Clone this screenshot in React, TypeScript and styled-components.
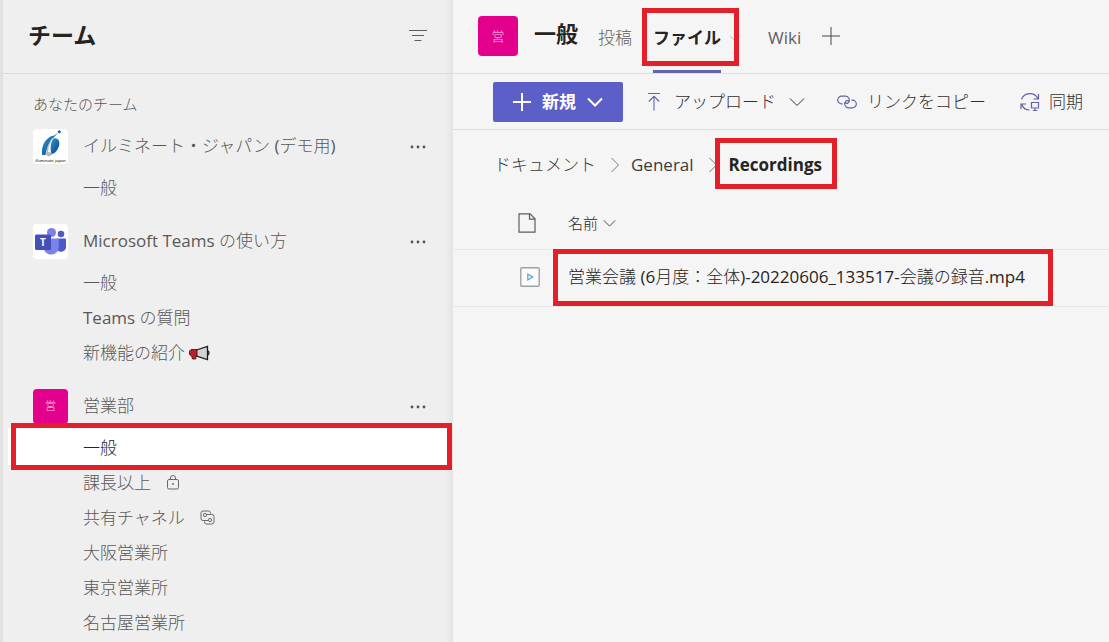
import React from "react";
import styled, { createGlobalStyle, css } from "styled-components";

const lightStack = `"Open Sans", "Noto Sans CJK JP Light", "Noto Sans CJK JP", sans-serif`;
const boldStack = `"Open Sans", "Noto Sans CJK JP", sans-serif`;

const GlobalStyle = createGlobalStyle`
  *, *::before, *::after { box-sizing: border-box; }
  html, body, #root { height: 100%; }
  body {
    margin: 0;
    background: #f5f5f5;
    color: #252423;
    font-family: ${lightStack};
    font-size: 17px;
    font-weight: 400;
    line-height: 24px;
  }
  h1, h2, h3, ul, ol { margin: 0; padding: 0; }
  ul, ol { list-style: none; }
  a { color: inherit; text-decoration: none; }
  button {
    margin: 0; padding: 0; border: 0; background: none;
    font: inherit; color: inherit; cursor: pointer;
  }
  svg { display: block; flex: none; }
`;

const bold = css`
  font-family: ${boldStack};
  font-weight: 700;
`;

const marked = css<{ $inset: string }>`
  position: relative;
  &::after {
    content: "";
    position: absolute;
    inset: ${(p) => p.$inset};
    border: 5px solid #e3202a;
    pointer-events: none;
    z-index: 2;
  }
`;

const Shell = styled.div`
  display: flex;
  min-height: 100%;
  border-left: 3px solid #e1e1e1;
`;

const Sidebar = styled.aside`
  flex: none;
  width: 450px;
  background: linear-gradient(to left, #e4e4e4, #efefef 8px);
  color: #5a5856;
`;

const SidebarHeader = styled.header`
  display: flex;
  align-items: center;
  justify-content: space-between;
  height: 74px;
  padding: 0 26px 4px 25px;
  border-bottom: 1px solid #dcdcdc;
`;

const SidebarTitle = styled.h1`
  ${bold}
  color: #252423;
  font-size: 23px;
  line-height: 32px;
`;

const IconButton = styled.button`
  display: flex;
  align-items: center;
`;

const SectionLabel = styled.h2`
  padding: 18px 30px 6px;
  font-size: 15px;
  font-weight: 400;
`;

const TeamList = styled.ul`
  display: grid;
  gap: 12px;
`;

const TeamRow = styled.div`
  display: flex;
  align-items: center;
  height: 48px;
  padding: 0 26px 0 30px;
`;

const TeamName = styled.h3`
  flex: 1;
  margin-left: 15px;
  font-size: 17px;
  font-weight: 400;
`;

const Avatar = styled.span<{ $size: number; $color: string }>`
  display: flex;
  align-items: center;
  justify-content: center;
  flex: none;
  width: ${(p) => p.$size}px;
  height: ${(p) => p.$size}px;
  border-radius: 4px;
  background: ${(p) => p.$color};
  color: #ffc4e6;
  font-size: ${(p) => (p.$size > 35 ? 13 : 11)}px;
  overflow: hidden;
`;

const ChannelItem = styled.li<{ $selected?: boolean; $inset: string }>`
  margin: 0 4px 0 5px;
  ${(p) =>
    p.$selected &&
    css`
      ${marked}
      background: #fff;
      box-shadow: 0 -2px 0 #fff;
      color: #252423;
    `}
`;

const ChannelLink = styled.a`
  display: flex;
  align-items: center;
  height: 35px;
  padding-left: 75px;
`;

const ChannelIcon = styled.span<{ $gap: number }>`
  margin-left: ${(p) => p.$gap}px;
`;

const Main = styled.main`
  flex: 1;
  min-width: 0;
`;

const ChannelHeader = styled.header`
  display: flex;
  align-items: center;
  height: 74px;
  padding-left: 25px;
  border-bottom: 1px solid #dfdfdf;
`;

const HeaderTitle = styled.div`
  display: flex;
  align-items: center;
  padding-bottom: 2px;
`;

const ChannelTitle = styled.h2`
  ${bold}
  margin: 0 20px 6px 16px;
  font-size: 22px;
  line-height: 32px;
`;

const Tabs = styled.nav`
  display: flex;
  align-self: stretch;
`;

const Tab = styled.a<{ $active?: boolean }>`
  display: flex;
  align-items: center;
  padding-top: 5px;
  border-bottom: 3px solid ${(p) => (p.$active ? "#6264a7" : "transparent")};
  color: ${(p) => (p.$active ? "#252423" : "#605e5c")};
  ${(p) => p.$active && bold}
`;

const ActiveTab = styled.div<{ $inset: string }>`
  ${marked}
  display: flex;
  margin: 0 28px 0 21px;
`;

const TabMenu = styled.button`
  padding: 4px 0 0 9px;
  color: #8a8886;
`;

const AddTab = styled.button`
  margin: 0 0 2px 21px;
  color: #484644;
`;

const Toolbar = styled.div`
  display: flex;
  align-items: center;
  height: 56px;
  padding-left: 40px;
  border-bottom: 1px solid #dfdfdf;
  color: #323130;
  white-space: nowrap;
`;

const NewButton = styled.button`
  display: flex;
  align-items: center;
  justify-content: center;
  gap: 11px;
  width: 130px;
  height: 40px;
  border-radius: 2px;
  background: #5b5fc7;
  color: #fff;
  ${bold}
`;

const Command = styled.button<{ $before: number; $gap: number }>`
  display: flex;
  align-items: center;
  gap: ${(p) => p.$gap}px;
  margin-left: ${(p) => p.$before}px;
`;

const Accent = styled.span`
  color: #6264a7;
`;

const Breadcrumb = styled.ol`
  display: flex;
  align-items: center;
  height: 67px;
  padding: 3px 0 0 41px;
  color: #3b3a39;
`;

const Crumb = styled.li`
  display: flex;
  align-items: center;
`;

const CrumbChevron = styled.span`
  margin: 0 11px 0 14px;
  color: #797775;
`;

const CurrentCrumb = styled.span<{ $inset: string }>`
  ${marked}
  ${bold}
  color: #252423;
`;

const FileTable = styled.table`
  width: 100%;
  border-collapse: collapse;
  table-layout: fixed;
  th, td {
    padding: 0;
    border-bottom: 1px solid #e9e9e9;
    text-align: left;
    font-weight: 400;
  }
`;

const HeadCell = styled.th<{ $width?: number }>`
  width: ${(p) => (p.$width ? `${p.$width}px` : "auto")};
  height: 52px;
  font-size: 15px;
`;

const FileCell = styled.td`
  && {
    height: 57px;
    padding-bottom: 2px;
  }
`;

const IconSlot = styled.span<{ $left: number }>`
  display: flex;
  padding-left: ${(p) => p.$left}px;
`;

const SortButton = styled.button`
  display: flex;
  align-items: center;
  gap: 5px;
`;

const FileLink = styled.a<{ $inset: string }>`
  ${marked}
  display: inline-block;
  white-space: nowrap;
`;

const Chevron = ({ w = 16, dir = "down", stroke = 1 }: { w?: number; dir?: "down" | "right"; stroke?: number }) =>
  dir === "down" ? (
    <svg width={w} height={w / 2 + 2} viewBox="0 0 16 10" fill="none" stroke="currentColor" strokeWidth={stroke} aria-hidden="true">
      <path d="M1 1.5 8 8.5 15 1.5" />
    </svg>
  ) : (
    <svg width="10" height="16" viewBox="0 0 10 16" fill="none" stroke="currentColor" aria-hidden="true">
      <path d="M1.5 1 8.5 8 1.5 15" />
    </svg>
  );

const Plus = ({ size = 18, stroke = 1 }: { size?: number; stroke?: number }) => (
  <svg width={size} height={size} viewBox="0 0 18 18" stroke="currentColor" strokeWidth={stroke} aria-hidden="true">
    <path d="M9 0v18M0 9h18" />
  </svg>
);

const FilterIcon = () => (
  <svg width="18" height="14" viewBox="0 0 18 14" stroke="#605e5c" aria-hidden="true">
    <path d="M0 2.5h18M3 7.5h12M5.5 12.5h7" />
  </svg>
);

const MoreIcon = () => (
  <svg width="18" height="6" viewBox="0 0 18 6" fill="#55534f" aria-hidden="true">
    <circle cx="3" cy="4" r="1.4" />
    <circle cx="9" cy="4" r="1.4" />
    <circle cx="15" cy="4" r="1.4" />
  </svg>
);

const IlluminateLogo = () => (
  <svg width="35" height="35" viewBox="0 0 35 35" aria-hidden="true">
    <defs>
      <linearGradient id="leaf" x1="0" y1="0" x2="1" y2="1">
        <stop offset="0" stopColor="#2f9bd0" />
        <stop offset="1" stopColor="#0b3f86" />
      </linearGradient>
    </defs>
    <path d="M9 26C8 16 13 8 21 6.500L26 3.200C18 10 14 17 12.500 26Z" fill="url(#leaf)" />
    <path d="M20.500 9.500C26 8 28 14 25 19.500c-2 4-5 6-7.500 5.500C16 20 17 14 20.500 9.500Z" fill="url(#leaf)" />
    <path d="M13 25C14 18 16 12 20.500 8 17 15 16.500 20 19 25.500c-1.500 2.500-5 2.500-6-.5Z" fill="#aeb8bf" />
    <path d="M15 23C15.500 17 17 13 20 9c-2.500 6-3 10-2 14.500Z" fill="#f7fafb" />
    <circle cx="26.300" cy="2.800" r="1.500" fill="#1c5e9c" />
    <text x="17.500" y="33" textAnchor="middle" fontFamily="Liberation Sans, sans-serif" fontSize="4.400" fontWeight="400" fill="#222">
      illuminate japan
    </text>
  </svg>
);

const TeamsLogo = () => (
  <svg width="35" height="35" viewBox="0 0 35 35" aria-hidden="true">
    <circle cx="28" cy="10" r="3.300" fill="#5059c9" />
    <path d="M24 14.500h8.200a.8.8 0 0 1 .8.800v7.500a5 5 0 0 1-9 3Z" fill="#5059c9" />
    <circle cx="18.500" cy="8.500" r="4.500" fill="#7b83eb" />
    <path d="M11.500 14.500h13.300a1 1 0 0 1 1 1V24a7.700 7.700 0 0 1-15.200 0v-8.500a1 1 0 0 1 .9-1Z" fill="#7b83eb" />
    <path d="M14 11h4v15h-7.200L10.600 14.500Z" fill="#5a62c4" />
    <rect x="2" y="10.500" width="16" height="15.500" rx="1.500" fill="#464eb8" />
    <text x="10" y="22" textAnchor="middle" fontFamily="Open Sans, sans-serif" fontSize="10" fontWeight="700" fill="#fff">
      T
    </text>
  </svg>
);

const MegaphoneIcon = () => (
  <svg width="22" height="16" viewBox="0 0 22 16" aria-hidden="true">
    <path d="M8.500 5 19.500 1.500v13L8.500 11Z" fill="#d3d3d3" stroke="#1b1b1b" strokeWidth="1.300" />
    <path d="M19.500 6c2 .3 2 3.700 0 4" fill="none" stroke="#1b1b1b" strokeWidth="1.300" />
    <path d="M3 4.500h6v6.800H7.800V14H4.500l-.8-2.700-2.200-1.800V6Z" fill="#b9202f" stroke="#3a1014" strokeWidth=".8" />
  </svg>
);

const LockIcon = () => (
  <svg width="14" height="16" viewBox="0 0 14 16" fill="none" stroke="#6b6967" aria-hidden="true">
    <rect x="1.500" y="4.500" width="11" height="9.500" rx="1.500" />
    <path d="M4.500 4.500V3a2.500 2.500 0 0 1 5 0v1.500" />
    <circle cx="7" cy="9" r=".9" fill="#6b6967" stroke="none" />
  </svg>
);

const SharedIcon = () => (
  <svg width="15" height="15" viewBox="0 0 15 15" fill="none" stroke="#6b6967" aria-hidden="true">
    <path d="M10.500 3.500V3A2 2 0 0 0 8.500 1H3a2 2 0 0 0-2 2v5.500a2 2 0 0 0 2 2h5" />
    <path d="M4.500 11.500v.5a2 2 0 0 0 2 2H12a2 2 0 0 0 2-2V6.500a2 2 0 0 0-2-2H6.500" />
    <circle cx="5" cy="5" r="1.600" />
    <circle cx="10" cy="10" r="1.600" />
  </svg>
);

const UploadIcon = () => (
  <svg width="14" height="19" viewBox="0 0 14 19" fill="none" stroke="currentColor" strokeWidth="1.100" aria-hidden="true">
    <path d="M1 1.500h12M7 18.500V4.500M1.800 9.500 7 4.300l5.200 5.200" />
  </svg>
);

const LinkIcon = () => (
  <svg width="20" height="14" viewBox="0 0 20 14" fill="none" stroke="currentColor" strokeWidth="1.200" aria-hidden="true">
    <path d="M5.500 8.800H4.500a3.800 3.800 0 0 1 0-7.600H8.500a3.800 3.800 0 0 1 2.600 6.600c-1 1-3 .9-3.400-.6" />
    <path d="M14.500 5.200h1a3.800 3.800 0 0 1 0 7.600H11.500a3.800 3.800 0 0 1-2.600-6.600c1-1 3-.9 3.400.6" />
  </svg>
);

const SyncIcon = () => (
  <svg width="20" height="20" viewBox="0 0 20 20" fill="none" stroke="currentColor" strokeWidth="1.200" aria-hidden="true">
    <path d="M1.500 7.500C4 0 14.500-.5 17.800 6.500M18.500 2v5h-5" />
    <path d="M9.500 18C6 18 3 16 1.800 12.500M1 17v-5h5" />
    <path d="M11.500 10.500h7v5.500h-7ZM15 16v2.500M12.800 18.500h4.400" />
  </svg>
);

const PageIcon = () => (
  <svg width="18" height="20" viewBox="0 0 18 20" fill="none" stroke="#605e5c" strokeWidth="1.200" aria-hidden="true">
    <path d="M1 .8h11l5 5v13.400H1Z" />
    <path d="M11.500.8v5.400H17" />
  </svg>
);

const VideoIcon = () => (
  <svg width="20" height="20" viewBox="0 0 20 20" aria-hidden="true">
    <rect x=".8" y=".8" width="18.400" height="18.400" rx="1" fill="#fbfbfb" stroke="#a3a19f" strokeWidth="1.400" />
    <path d="M7.800 7v6l5-3Z" fill="#eaf5fc" stroke="#5ba3d0" strokeWidth="1.200" />
  </svg>
);

type Channel = { name: string; selected?: boolean; icon?: React.ReactNode; gap?: number };
type Team = { name: string; avatar: React.ReactNode; color: string; channels: Channel[] };

const teams: Team[] = [
  {
    name: "イルミネート・ジャパン (デモ用)",
    avatar: <IlluminateLogo />,
    color: "#fff",
    channels: [{ name: "一般" }],
  },
  {
    name: "Microsoft Teams の使い方",
    avatar: <TeamsLogo />,
    color: "#fff",
    channels: [
      { name: "一般" },
      { name: "Teams の質問" },
      { name: "新機能の紹介", icon: <MegaphoneIcon />, gap: 3 },
    ],
  },
  {
    name: "営業部",
    avatar: "営",
    color: "#e3008c",
    channels: [
      { name: "一般", selected: true },
      { name: "課長以上", icon: <LockIcon />, gap: 15 },
      { name: "共有チャネル", icon: <SharedIcon />, gap: 15 },
      { name: "大阪営業所" },
      { name: "東京営業所" },
      { name: "名古屋営業所" },
    ],
  },
];

export default function App() {
  return (
    <>
      <GlobalStyle />
      <Shell>
        <Sidebar>
          <SidebarHeader>
            <SidebarTitle>チーム</SidebarTitle>
            <IconButton aria-label="フィルター">
              <FilterIcon />
            </IconButton>
          </SidebarHeader>
          <SectionLabel>あなたのチーム</SectionLabel>
          <TeamList>
            {teams.map((team) => (
              <li key={team.name}>
                <TeamRow>
                  <Avatar $size={35} $color={team.color}>{team.avatar}</Avatar>
                  <TeamName>{team.name}</TeamName>
                  <IconButton aria-label="その他のオプション">
                    <MoreIcon />
                  </IconButton>
                </TeamRow>
                <ul>
                  {team.channels.map((channel) => (
                    <ChannelItem key={channel.name} $selected={channel.selected} $inset="-7px -3px -5px 3px">
                      <ChannelLink href="#">
                        {channel.name}
                        {channel.icon && <ChannelIcon $gap={channel.gap ?? 0}>{channel.icon}</ChannelIcon>}
                      </ChannelLink>
                    </ChannelItem>
                  ))}
                </ul>
              </li>
            ))}
          </TeamList>
        </Sidebar>
        <Main>
          <ChannelHeader>
            <HeaderTitle>
              <Avatar $size={40} $color="#e3008c">営</Avatar>
              <ChannelTitle>一般</ChannelTitle>
            </HeaderTitle>
            <Tabs>
              <Tab href="#">投稿</Tab>
              <ActiveTab $inset="8px 1px 7px -11px">
                <Tab href="#" $active>ファイル</Tab>
                <TabMenu aria-label="タブのオプション">
                  <Chevron w={10} />
                </TabMenu>
              </ActiveTab>
              <Tab href="#">Wiki</Tab>
            </Tabs>
            <AddTab aria-label="タブを追加">
              <Plus />
            </AddTab>
          </ChannelHeader>
          <Toolbar>
            <NewButton>
              <Plus stroke={2} />
              新規
              <Chevron w={16} stroke={2} />
            </NewButton>
            <Command $before={24} $gap={13}>
              <Accent><UploadIcon /></Accent>
              アップロード
              <Chevron w={16} />
            </Command>
            <Command $before={32} $gap={10}>
              <Accent><LinkIcon /></Accent>
              リンクをコピー
            </Command>
            <Command $before={34} $gap={9}>
              <Accent><SyncIcon /></Accent>
              同期
            </Command>
          </Toolbar>
          <Breadcrumb>
            <Crumb>
              <a href="#">ドキュメント</a>
              <CrumbChevron><Chevron dir="right" /></CrumbChevron>
            </Crumb>
            <Crumb>
              <a href="#">General</a>
              <CrumbChevron><Chevron dir="right" /></CrumbChevron>
            </Crumb>
            <Crumb>
              <CurrentCrumb $inset="-15px -15px -12px -14px">Recordings</CurrentCrumb>
            </Crumb>
          </Breadcrumb>
          <FileTable>
            <thead>
              <tr>
                <HeadCell $width={115}>
                  <IconSlot $left={65}><PageIcon /></IconSlot>
                </HeadCell>
                <HeadCell>
                  <SortButton>
                    名前
                    <Chevron w={13} />
                  </SortButton>
                </HeadCell>
              </tr>
            </thead>
            <tbody>
              <tr>
                <FileCell>
                  <IconSlot $left={67}><VideoIcon /></IconSlot>
                </FileCell>
                <FileCell>
                  <FileLink href="#" $inset="-16px -28px -17px -15px">
                    営業会議 (6月度：全体)-20220606_133517-会議の録音.mp4
                  </FileLink>
                </FileCell>
              </tr>
            </tbody>
          </FileTable>
        </Main>
      </Shell>
    </>
  );
}
